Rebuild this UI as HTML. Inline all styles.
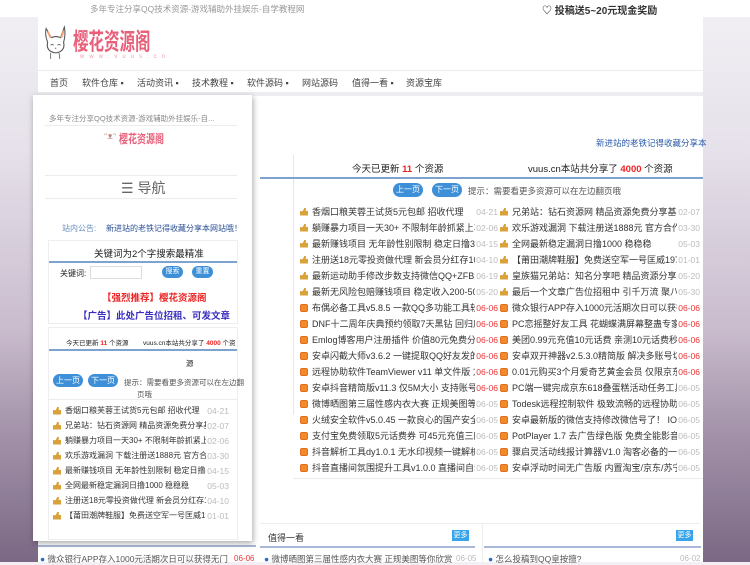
<!DOCTYPE html>
<html><head><meta charset="utf-8"><style>
*{margin:0;padding:0;box-sizing:border-box}
body{width:750px;height:562px;overflow:hidden;position:relative;font-family:"Liberation Sans","Noto Sans CJK SC",sans-serif;font-size:10px;color:#333;background:linear-gradient(180deg,#f2f0f5 0px,#e6e1ea 150px,#c9bccd 330px,#a493aa 430px,#7a6884 562px)}
.a{position:absolute;white-space:nowrap}
.top{left:0;top:0;width:750px;height:17px;background:#fff}
.main{left:38px;top:17px;width:665px;height:545px;background:#fff}
.row{position:absolute;height:15px;display:flex;align-items:center;color:#333;overflow:hidden}
.row .t{flex:1;overflow:hidden;white-space:nowrap}
.row .d{color:#bbb;flex:none;margin-left:1px;font-size:8.5px}
.row .d.r{color:#e33}
.ic{display:inline-block;width:8px;height:8px;margin-right:4px;flex:none}
.th{background:#d9a13a;clip-path:polygon(0 45%,35% 45%,55% 0,75% 10%,70% 40%,100% 45%,100% 100%,0 100%)}
.sq{background:#f28a2c;border-radius:2px;border:1px solid #e07020}
.btn{position:absolute;height:14px;border-radius:8px;background:#3d8fd8;color:#fff;font-size:8px;text-align:center;line-height:14px}
.ln{position:absolute;height:2px;background:#7fa3cf}
.sep{position:absolute;height:1px;background:#ececec}
</style></head><body>
<div class="a top"></div>
<div class="a main"></div>
<div class="a" style="left:90px;top:3px;font-size:8.5px;color:#999">多年专注分享QQ技术资源-游戏辅助外挂娱乐-自学教程网</div>
<div class="a" style="left:542px;top:2px;font-size:10px;color:#333;font-weight:bold">&#9825; 投稿送5~20元现金奖励</div>
<svg class="a" style="left:40px;top:24px" width="32" height="38" viewBox="0 0 32 50"><path d="M3 6 L10 18 Q16 15 22 18 L27 4 Q29 14 26 24 Q28 32 22 36 Q16 40 9 36 Q3 32 5 24 Q1 14 3 6Z" fill="none" stroke="#555" stroke-width="1.4"/><path d="M5 10 L9 18 M26 9 L23 18" stroke="#f0a27a" stroke-width="2.5"/><path d="M9 28q2-2 4 0M18 28q2-2 4 0" stroke="#333" fill="none"/><circle cx="15.5" cy="32" r="1" fill="#e66"/><path d="M9 38 L9 46 M20 38 L21 46" stroke="#555"/></svg>
<div class="a" style="left:73px;top:24px;font-size:15.5px;color:#e8607a;font-weight:bold;transform:scaleY(1.5);transform-origin:0 0">樱花资源阁</div>
<div class="a" style="left:80px;top:54px;font-size:6px;color:#f2a0b0;letter-spacing:5px">www.vuus.cn</div>
<div class="sep" style="left:38px;top:70px;width:665px"></div>
<div class="a" style="left:50px;top:76px;font-size:9px;color:#444">首页</div>
<div class="a" style="left:82px;top:76px;font-size:9px;color:#444">软件仓库 ▪</div>
<div class="a" style="left:137px;top:76px;font-size:9px;color:#444">活动资讯 ▪</div>
<div class="a" style="left:192px;top:76px;font-size:9px;color:#444">技术教程 ▪</div>
<div class="a" style="left:247px;top:76px;font-size:9px;color:#444">软件源码 ▪</div>
<div class="a" style="left:302px;top:76px;font-size:9px;color:#444">网站源码</div>
<div class="a" style="left:352px;top:76px;font-size:9px;color:#444">值得一看 ▪</div>
<div class="a" style="left:406px;top:76px;font-size:9px;color:#444">资源宝库</div>
<div class="a" style="left:38px;top:92px;width:665px;height:4px;background:#eeeef2"></div>
<div class="a" style="left:596px;top:137px;font-size:8.5px;color:#2a5aa8">新进站的老铁记得收藏分享本</div>
<div class="a" style="left:293px;top:155px;width:1px;height:260px;background:#e6e6e6"></div>
<div class="a" style="left:352px;top:161px;font-size:9.5px;color:#222">今天已更新 <b style="color:#e22">11</b> 个资源</div>
<div class="a" style="left:528px;top:161px;font-size:9.5px;color:#222">vuus.cn本站共分享了 <b style="color:#e22">4000</b> 个资源</div>
<div class="ln" style="left:260px;top:177px;width:443px"></div>
<div class="btn" style="left:393px;top:183px;width:30px">上一页</div>
<div class="btn" style="left:432px;top:183px;width:30px">下一页</div>
<div class="a" style="left:468px;top:185px;font-size:8.5px;color:#555">提示：需要看更多资源可以在左边翻页哦</div>
<div id="L"></div>
<div class="sep" style="left:293px;top:478px;width:410px"></div>
<div class="a" style="left:260px;top:523px;width:440px;height:1px;background:#eee"></div>
<div class="a" style="left:268px;top:531px;font-size:9px;color:#333">值得一看</div>
<div class="a" style="left:452px;top:530px;width:17px;height:11px;background:#3aa4ea;color:#fff;font-size:7px;text-align:center;line-height:11px">更多</div>
<div class="a" style="left:676px;top:530px;width:17px;height:11px;background:#3aa4ea;color:#fff;font-size:7px;text-align:center;line-height:11px">更多</div>
<div class="ln" style="left:260px;top:546px;width:215px;background:#a9b8d8"></div>
<div class="ln" style="left:484px;top:546px;width:217px;background:#a9b8d8"></div>
<div class="a" style="left:482px;top:523px;width:1px;height:39px;background:#eee"></div>
<div class="ln" style="left:38px;top:545px;width:218px;background:#a9b8d8"></div>
<div class="a" style="left:40px;top:553px;font-size:8.5px;color:#555"><span style="color:#2a6cc0">●</span> 微众银行APP存入1000元活期次日可以获得无门</div>
<div class="a" style="left:234px;top:554px;font-size:8px;color:#e33">06-06</div>
<div class="a" style="left:264px;top:553px;font-size:8.5px;color:#555"><span style="color:#2a6cc0">●</span> 微博晒图第三届性感内衣大赛 正规美图等你欣赏</div>
<div class="a" style="left:456px;top:554px;font-size:8px;color:#bbb">06-05</div>
<div class="a" style="left:488px;top:553px;font-size:8.5px;color:#555"><span style="color:#2a6cc0">●</span> 怎么投稿到QQ皇按擅?</div>
<div class="a" style="left:680px;top:554px;font-size:8px;color:#bbb">06-02</div>
<div class="a" style="left:33px;top:95px;width:219px;height:446px;background:#fff;box-shadow:1px 2px 6px rgba(0,0,0,.35)"></div>
<div class="a" style="left:49px;top:113px;font-size:7.5px;color:#888">多年专注分享QQ技术资源-游戏辅助外挂娱乐-自...</div>
<div class="sep" style="left:45px;top:125px;width:192px"></div>
<div class="a" style="left:119px;top:130px;font-size:9px;color:#e8607a;font-weight:bold;transform:scaleY(1.3);transform-origin:0 0">樱花资源阁</div>
<div class="a" style="left:104px;top:131px;font-size:9px;color:#b88">ᵔᴥᵔ</div>
<div class="sep" style="left:45px;top:175px;width:192px"></div>
<div class="a" style="left:121px;top:178px;font-size:14px;color:#666">☰ 导航</div>
<div class="sep" style="left:45px;top:198px;width:192px"></div>
<div class="a" style="left:62px;top:223px;font-size:8px;color:#6a8ec0">站内公告:</div>
<div class="a" style="left:106px;top:223px;font-size:8px;color:#2a4f96">新进站的老铁记得收藏分享本网站哦！</div>
<div class="a" style="left:48px;top:240px;width:190px;height:84px;border:1px solid #eee"></div>
<div class="a" style="left:94px;top:246px;font-size:9.5px;color:#222">关键词为2个字搜索最精准</div>
<div class="ln" style="left:49px;top:261px;width:188px"></div>
<div class="a" style="left:60px;top:268px;font-size:8px;color:#222">关键词:</div>
<div class="a" style="left:90px;top:266px;width:52px;height:13px;border:1px solid #ddd"></div>
<div class="btn" style="left:162px;top:266px;width:21px;height:12px;line-height:12px;font-size:7px">搜索</div>
<div class="btn" style="left:192px;top:266px;width:21px;height:12px;line-height:12px;font-size:7px">重置</div>
<div class="a" style="left:102px;top:290px;font-size:9.5px;color:#e22;font-weight:bold">【强烈推荐】樱花资源阁</div>
<div class="a" style="left:78px;top:308px;font-size:9.5px;color:#3a2fc0;font-weight:bold">【广告】此处广告位招租、可发文章</div>
<div class="a" style="left:48px;top:327px;width:190px;height:213px;border:1px solid #eee"></div>
<div class="a" style="left:66px;top:337px;font-size:6.5px;color:#222">今天已更新 <b style="color:#e22">11</b> 个资源</div>
<div class="a" style="left:143px;top:337px;font-size:6.5px;color:#222">vuus.cn本站共分享了 <b style="color:#e22">4000</b> 个资</div>
<div class="ln" style="left:49px;top:349px;width:188px"></div>
<div class="a" style="left:186px;top:358px;font-size:7.5px;color:#222">源</div>
<div class="btn" style="left:53px;top:374px;width:30px;height:13px;line-height:13px">上一页</div>
<div class="btn" style="left:88px;top:374px;width:30px;height:13px;line-height:13px">下一页</div>
<div class="a" style="left:124px;top:377px;font-size:7.5px;color:#555">提示：需要看更多资源可以在左边翻</div>
<div class="a" style="left:137px;top:389px;font-size:7.5px;color:#555">页哦</div>
<div class="sep" style="left:49px;top:399px;width:188px"></div>
<div id="P"></div>
<script>
var L=[["香烟口粮芙蓉王试货5元包邮 招收代理","04-21"],["躺赚暴力项目一天30+ 不限制年龄抓紧上车","02-06"],["最新赚钱项目 无年龄性别限制 稳定日撸300+","04-15"],["注册送18元零投资做代理 新会员分红存1000","04-10"],["最新运动助手修改步数支持微信QQ+ZFB步","06-19"],["最新无风险包赔赚钱项目 稳定收入200-500元","05-20"],["布偶必备工具v5.8.5 一款QQ多功能工具软件","06-06"],["DNF十二周年庆典预约领取7天黑钻 回归用户","06-06"],["Emlog博客用户注册插件 价值80元免费分享","06-06"],["安卓闪截大师v3.6.2 一键提取QQ好友发的闪照","06-06"],["远程协助软件TeamViewer v11 单文件版 方便","06-06"],["安卓抖音精简版v11.3 仅5M大小 支持账号登录","06-06"],["微博晒图第三届性感内衣大赛 正规美图等你欣","06-05"],["火绒安全软件v5.0.45 一款良心的国产安全软件","06-05"],["支付宝免费领取5元话费券 可45元充值三网50","06-05"],["抖音解析工具dy1.0.1 无水印视频一键解析软件","06-05"],["抖音直播间氛围提升工具v1.0.0 直播间自动发","06-05"]];
var R=[["兄弟站：钻石资源网 精品资源免费分享基地","02-07"],["欢乐游戏漏洞 下载注册送1888元 官方合作","03-30"],["全网最新稳定漏洞日撸1000 稳稳稳","05-03"],["【莆田潮牌鞋服】免费送空军一号匡威1970s","01-01"],["皇族猫兄弟站：知名分享吧 精品资源分享基地","05-20"],["最后一个文章广告位招租中 引千万流 聚八方","05-30"],["微众银行APP存入1000元活期次日可以获得无","06-06"],["PC恋摇整好友工具 花蝴蝶满屏幕整蛊专家 效","06-06"],["美团0.99元充值10元话费 亲测10元话费秒到","06-06"],["安卓双开神器v2.5.3.0精简版 解决多账号切换","06-06"],["0.01元购买3个月爱奇艺黄金会员 仅限京东白","06-06"],["PC端一键完成京东618叠蛋糕活动任务工具","06-05"],["Todesk远程控制软件 极致流畅的远程协助工具","06-05"],["安卓最新版的微信支持修改微信号了！ IOS版","06-05"],["PotPlayer 1.7 去广告绿色版 免费全能影音播","06-05"],["骤启灵活动线报计算器V1.0 淘客必备的一款软","06-05"],["安卓浮动时间无广告版 内置淘宝/京东/苏宁/招","06-05"]];
function row(x,y,w,it,i,fs){var red=it[1]=="06-06";var ic=i<6?'th':'sq';return '<div class="row" style="left:'+x+'px;top:'+y+'px;width:'+w+'px;font-size:'+fs+'px"><span class="ic '+ic+'"></span><span class="t">'+it[0]+'</span><span class="d'+(red?' r':'')+'">'+it[1]+'</span></div>';}
var h='';for(var i=0;i<17;i++){h+=row(300,204+i*16,198,L[i],i,9);h+=row(500,204+i*16,200,R[i],i,9);}
document.getElementById('L').outerHTML=h;
var P=[L[0],R[0],L[1],R[1],L[2],R[2],L[3],R[3]];var g='';
for(var j=0;j<8;j++){g+=row(53,403+j*15,176,P[j],0,8);}
document.getElementById('P').outerHTML=g;
</script>
</body></html>
